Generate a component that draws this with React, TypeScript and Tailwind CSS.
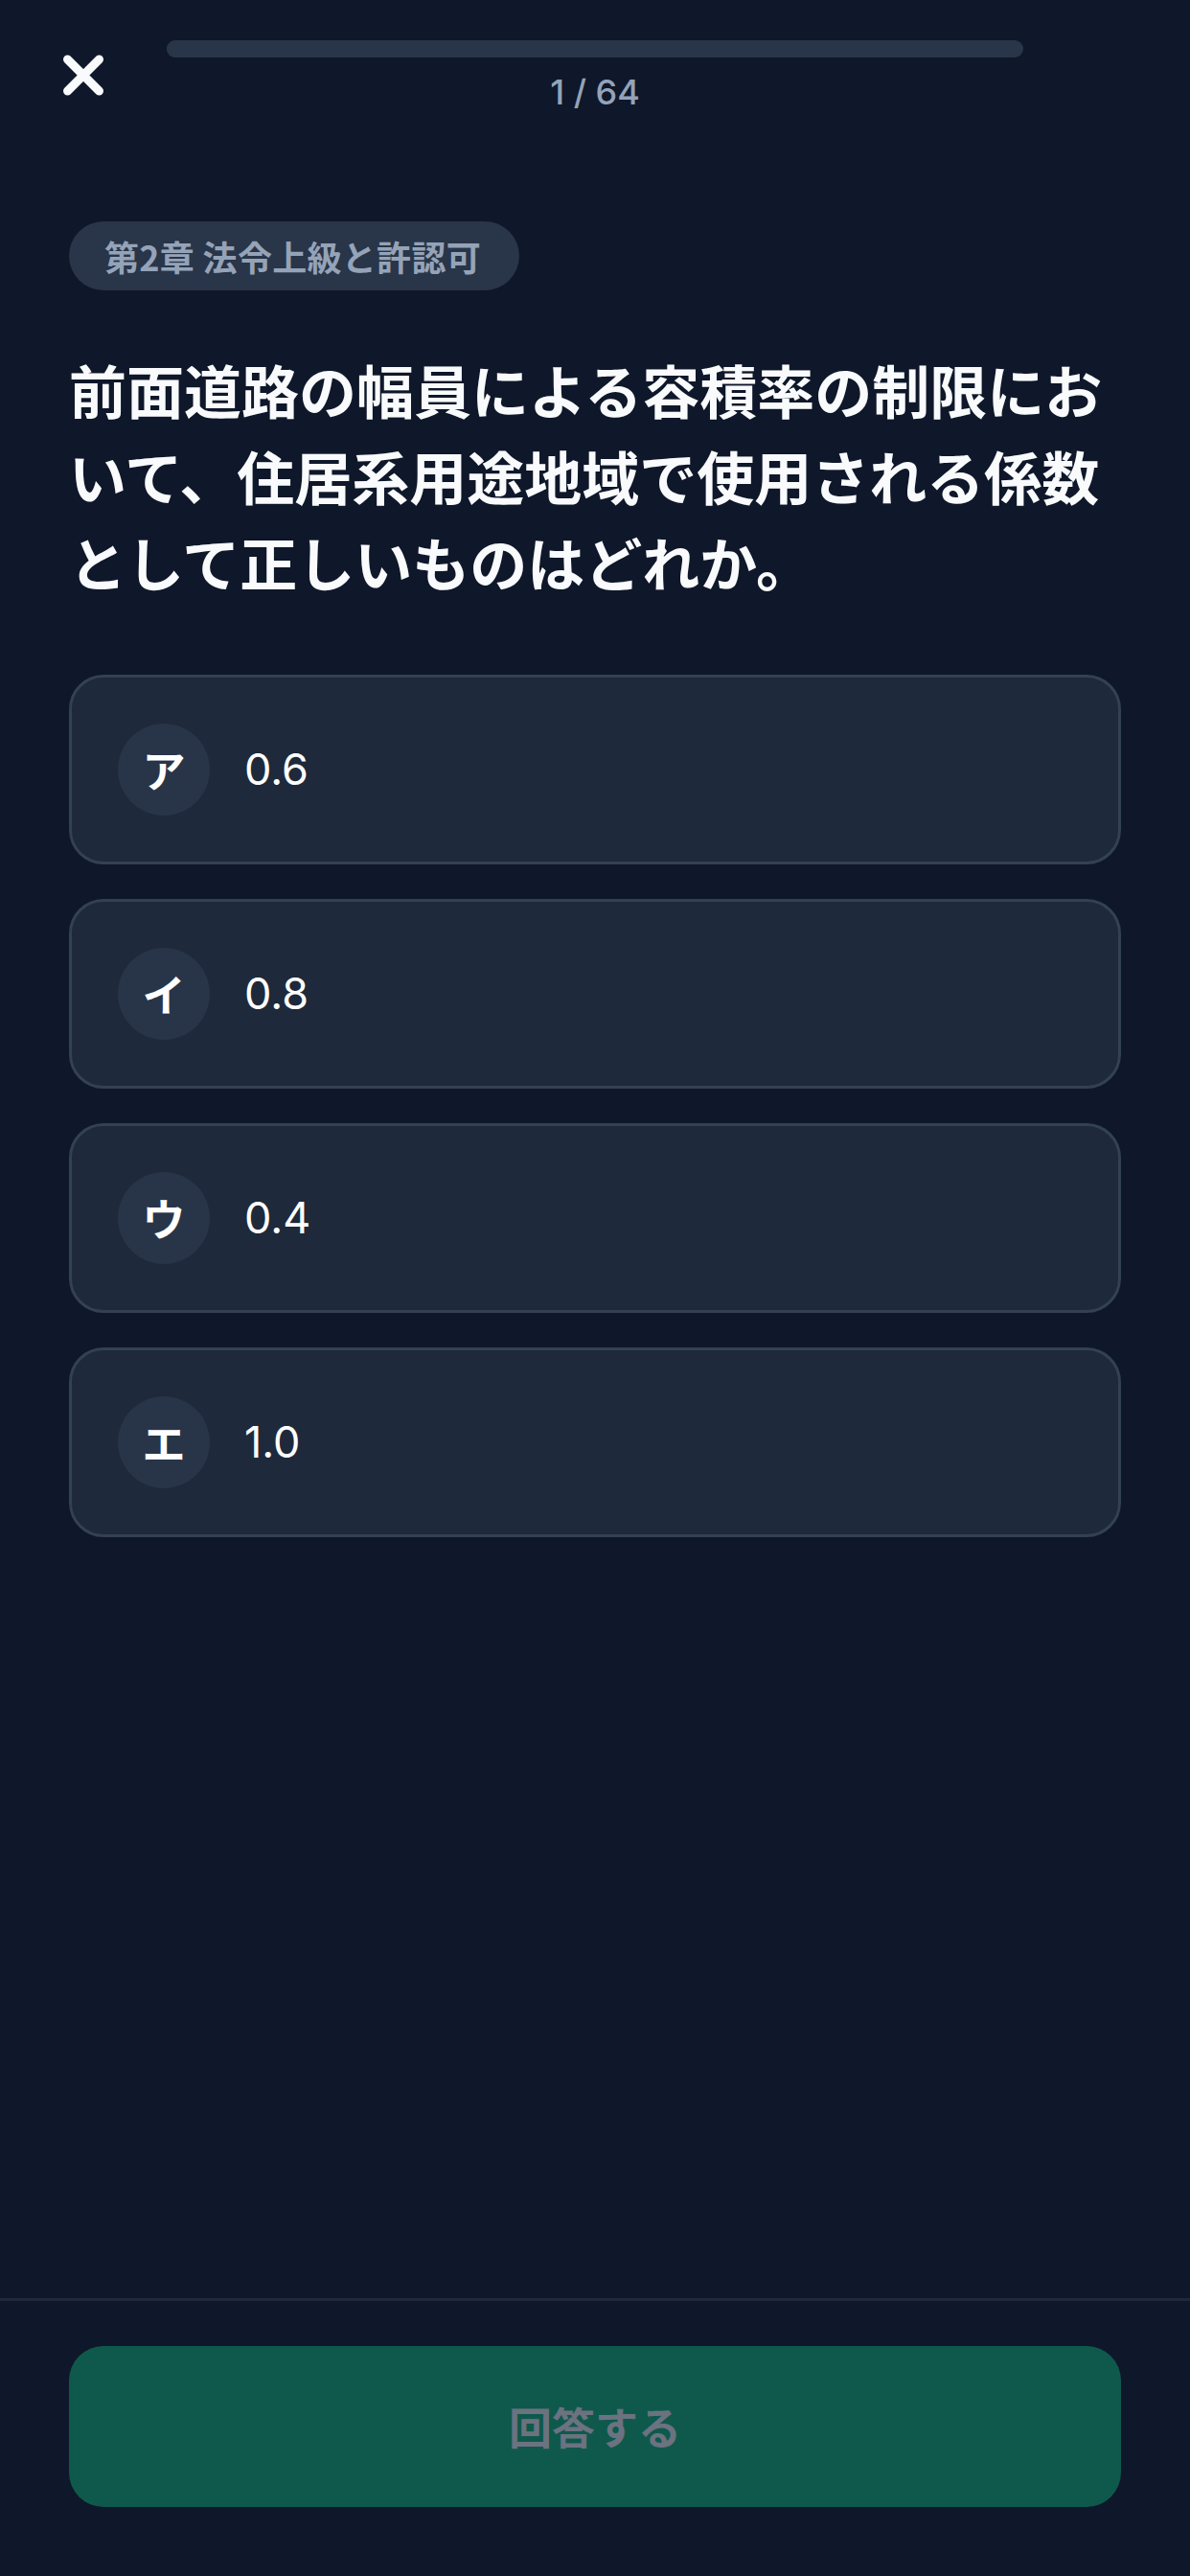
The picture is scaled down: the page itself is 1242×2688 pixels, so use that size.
import { useState } from "react";

const choices = [
  { key: "ア", value: "0.6" },
  { key: "イ", value: "0.8" },
  { key: "ウ", value: "0.4" },
  { key: "エ", value: "1.0" },
];

const CloseIcon = () => (
  <svg width="84" height="74" viewBox="0 0 84 74" fill="none">
    <path
      d="M25.5 20 L58.5 53 M58.5 20 L25.5 53"
      stroke="#f8fafc"
      strokeWidth="9"
      strokeLinecap="round"
    />
  </svg>
);

export default function App() {
  const [selected, setSelected] = useState<string | null>(null);

  return (
    <div
      className="min-h-[2688px] flex flex-col bg-[#0f172a] text-white"
      style={{ fontFamily: "Inter, 'Noto Sans CJK JP', sans-serif" }}
    >
      <header className="flex items-start px-[45px] pt-[42px] gap-[45px]">
        <button className="w-[84px] h-[74px] flex items-center justify-center shrink-0">
          <CloseIcon />
        </button>
        <div className="flex-1 flex flex-col items-center">
          <div className="w-full h-[18px] rounded-full bg-[#293548] overflow-hidden">
            <div className="h-full w-[1.5%] bg-[#293548]" />
          </div>
          <div className="mt-[12px] text-[36px] leading-[48px] font-medium text-[#94a3b8]">
            1 / 64
          </div>
        </div>
        <div className="w-[84px] shrink-0" />
      </header>

      <main className="flex-1 px-[72px]">
        <div className="mt-[111px]">
          <span
            className="inline-flex items-center h-[72px] pl-[37px] pr-[40px] rounded-full bg-[#293548] text-[36px] font-bold text-[#94a3b8] tracking-[0.3px]"
            style={{ fontFamily: "'Noto Sans CJK JP', sans-serif" }}
          >
            第2章 法令上級と許認可
          </span>
        </div>

        <h1
          className="mt-[58px] text-[60px] leading-[90px] font-bold text-[#f8fafc]"
          style={{ fontFamily: "'Noto Sans CJK JP', sans-serif" }}
        >
          前面道路の幅員による容積率の制限において、住居系用途地域で使用される係数として正しいものはどれか。
        </h1>

        <div className="mt-[73px] flex flex-col gap-[36px]">
          {choices.map((c) => (
            <button
              key={c.key}
              onClick={() => setSelected(c.key)}
              className={`flex items-center gap-[36px] p-[48px] rounded-[36px] border-[3px] text-left ${
                selected === c.key ? "border-[#10b981] bg-[#1e293b]" : "border-[#334155] bg-[#1e293b]"
              }`}
            >
              <span
                className="w-[96px] h-[96px] rounded-full bg-[#283548] flex items-center justify-center text-[45px] font-bold text-white shrink-0"
                style={{ fontFamily: "'Noto Sans CJK JP', sans-serif" }}
              >
                {c.key}
              </span>
              <span className="text-[45px] leading-[60px] text-white">{c.value}</span>
            </button>
          ))}
        </div>
      </main>

      <footer className="border-t-[3px] border-[#1e293b] px-[72px] pt-[47px] pb-[72px]">
        <button
          className="w-full h-[168px] rounded-[36px] bg-[#0f594c] text-[45px] font-bold text-[#6b7280]"
          style={{ fontFamily: "'Noto Sans CJK JP', sans-serif" }}
        >
          回答する
        </button>
      </footer>
    </div>
  );
}
